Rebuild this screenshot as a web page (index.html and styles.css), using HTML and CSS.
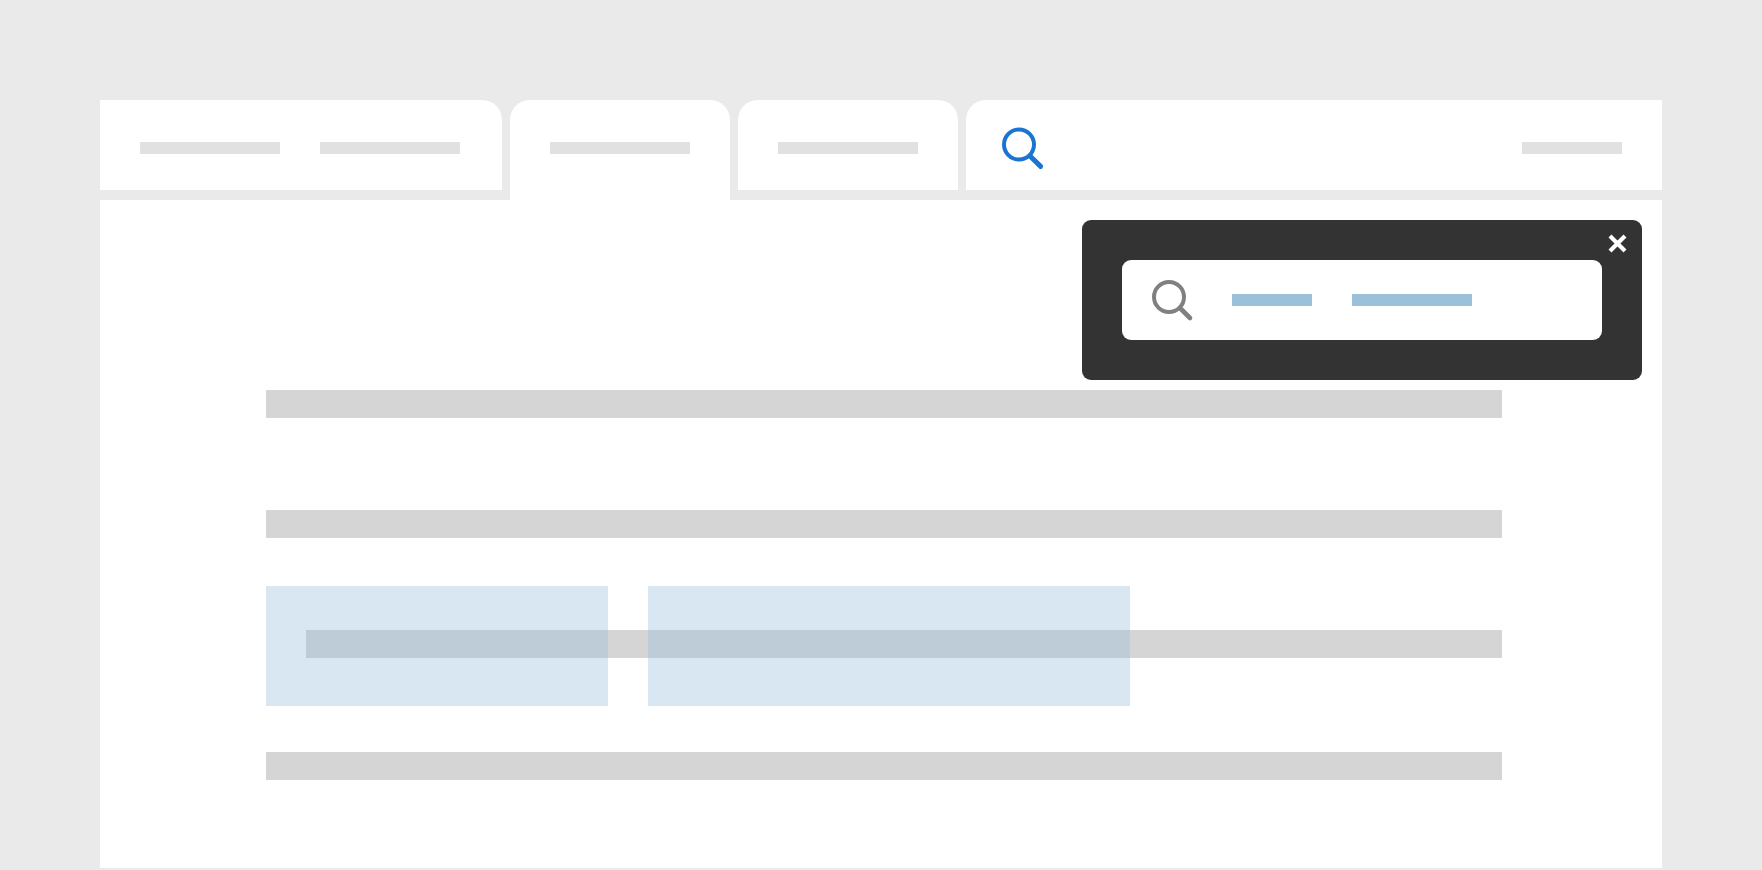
FILE: index.html
```html
<!DOCTYPE html>
<html lang="en">
<head>
<meta charset="utf-8">
<title>Search layout</title>
<link rel="stylesheet" href="styles.css">
</head>
<body>
<div class="page">
  <div class="tabs">
    <div class="tab tab-first">
      <span class="stub"></span>
      <span class="stub"></span>
    </div>
    <div class="tab tab-mid tab-active"><span class="stub"></span></div>
    <div class="tab tab-mid"><span class="stub"></span></div>
    <div class="tab tab-search">
      <svg class="icon-search" width="45" height="45" viewBox="0 0 45 45" fill="none" stroke="#1b75d0" stroke-width="4">
        <circle cx="17" cy="17.5" r="15"/>
        <path d="M28 29L38.6 39.4" stroke-width="5" stroke-linecap="round"/>
      </svg>
      <span class="stub stub-end"></span>
    </div>
  </div>
  <main class="content">
    <div class="line"></div>
    <div class="line"></div>
    <div class="line line-indent"></div>
    <div class="line line-last"></div>
    <div class="mark mark-a"></div>
    <div class="mark mark-b"></div>
    <div class="panel">
      <svg class="icon-close" width="20" height="20" viewBox="0 0 20 20" stroke="#fff" stroke-width="4.2">
        <path d="M2 2L17 17M17 2L2 17"/>
      </svg>
      <div class="search-box">
        <svg class="icon-search-grey" width="42" height="42" viewBox="0 0 42 42" fill="none" stroke="#808080" stroke-width="4">
          <circle cx="17" cy="17" r="15"/>
          <path d="M28 28L38 38" stroke-width="4.6" stroke-linecap="round"/>
        </svg>
        <span class="chip chip-a"></span>
        <span class="chip chip-b"></span>
      </div>
    </div>
  </main>
</div>
</body>
</html>
```
FILE: styles.css
```css
* { box-sizing: border-box; }
html, body { margin: 0; height: 100%; }
body { background: #eaeaea; overflow: hidden; font-family: "Liberation Sans", sans-serif; }
.page { padding: 100px 100px 0; width: 1762px; height: 870px; }
.tabs { display: flex; gap: 8px; height: 100px; align-items: flex-start; }
.tab { background: #fff; height: 90px; display: flex; align-items: flex-start; gap: 40px; padding-top: 42px; border-radius: 20px 20px 0 0; }
.tab-first { width: 402px; padding-left: 40px; border-top-left-radius: 0; }
.tab-mid { width: 220px; padding-left: 40px; }
.tab-active { height: 100px; }
.tab-search { flex: 1; padding-left: 36px; padding-right: 40px; justify-content: space-between; border-top-right-radius: 0; }
.stub { display: block; width: 140px; height: 12px; background: #e1e1e1; }
.stub-end { width: 100px; }
.icon-search { display: block; margin-top: -15px; }
.content { position: relative; background: #fff; height: 668px; padding: 190px 160px 0 166px; }
.line { height: 28px; background: #d5d5d5; margin-bottom: 92px; }
.line-indent { margin-left: 40px; margin-bottom: 94px; }
.line-last { margin-bottom: 0; }
.mark { position: absolute; top: 386px; height: 120px; background: rgba(150, 190, 220, 0.37); }
.mark-a { left: 166px; width: 342px; }
.mark-b { left: 548px; width: 482px; }
.panel { position: absolute; top: 20px; left: 982px; width: 560px; height: 160px; padding: 40px; background: #333; border-radius: 9px; }
.icon-close { position: absolute; top: 14px; right: 14px; display: block; }
.search-box { display: flex; align-items: flex-start; height: 80px; padding: 20px 0 0 30px; background: #fff; border-radius: 9px; }
.icon-search-grey { display: block; }
.chip { display: block; height: 12px; margin-top: 14px; background: #9ac0da; }
.chip-a { width: 80px; margin-left: 38px; }
.chip-b { width: 120px; margin-left: 40px; }
```
